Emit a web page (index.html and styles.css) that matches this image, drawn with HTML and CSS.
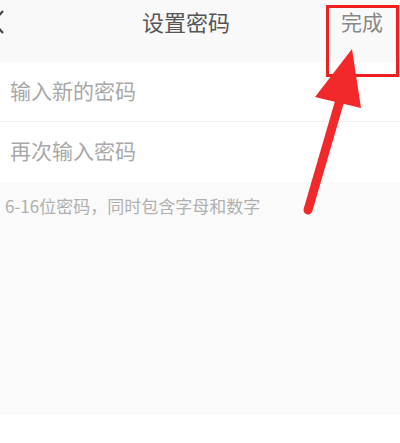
FILE: index.html
```html
<!DOCTYPE html>
<html lang="zh-CN">
<head>
<meta charset="UTF-8" />
<meta name="viewport" content="width=device-width, initial-scale=1" />
<title>设置密码</title>
<link rel="stylesheet" href="styles.css">
</head>
<body>

<section class="pwdPage">
  <header class="topBar">
    <svg class="backIcon" width="14" height="26" viewBox="0 0 14 26">
      <polyline points="12,2 2,13 12,24" fill="none" stroke="#444" stroke-width="2.2" />
    </svg>
    <div class="topTitle">设置密码</div>
    <div class="doneBtn">完成</div>
  </header>

  <div class="inputRow rowLine">输入新的密码</div>
  <div class="inputRow">再次输入密码</div>

  <div class="hintArea">
    <p class="hintText">6-16位密码，同时包含字母和数字</p>
  </div>

  <!-- annotation overlay -->
  <div class="markBox"></div>
  <svg class="markArrow" width="400" height="443" viewBox="0 0 400 443">
    <line x1="340" y1="100" x2="308" y2="210" stroke="#f2282a" stroke-width="9" stroke-linecap="round" />
    <polygon points="352,49 315,97 361,108" fill="#f2282a" />
  </svg>
</section>

</body>
</html>
```

FILE: styles.css
```css
body {
  margin: 0;
  background: #fff;
  font-family: "Noto Sans CJK SC", "Noto Sans", sans-serif;
}

.pwdPage {
  position: relative;
  width: 400px;
  height: 443px;
  overflow: hidden;
}

.topBar {
  height: 62px;
  background: #f9f9f9;
  display: flex;
  align-items: flex-start;
  padding-top: 7px;
  box-sizing: border-box;
}

.backIcon {
  margin-left: -9px;
  margin-top: 2px;
}

.topTitle {
  flex: 1;
  text-align: center;
  font-size: 22px;
  line-height: 28px;
  color: #555;
  padding-left: 32px;
}

.doneBtn {
  font-size: 21px;
  line-height: 28px;
  color: #888;
  width: 42px;
  margin-right: 17px;
  margin-left: 6px;
}

.inputRow {
  height: 60px;
  line-height: 57px;
  padding-left: 10px;
  font-size: 21px;
  color: #a8a8a8;
  background: #fff;
}

.rowLine {
  box-shadow: inset 0 -1px 0 #f2f2f2;
}

.hintArea {
  height: 233px;
  background: #fafafa;
  padding: 13px 5px 0;
  box-sizing: border-box;
}

.hintText {
  margin: 0;
  font-size: 17px;
  line-height: 22px;
  color: #b0b0b0;
}

.markBox {
  position: absolute;
  left: 326px;
  top: 5px;
  width: 73px;
  height: 72px;
  border: 3px solid #f01e1e;
  box-sizing: border-box;
}

.markArrow {
  position: absolute;
  left: 0;
  top: 0;
}
```
